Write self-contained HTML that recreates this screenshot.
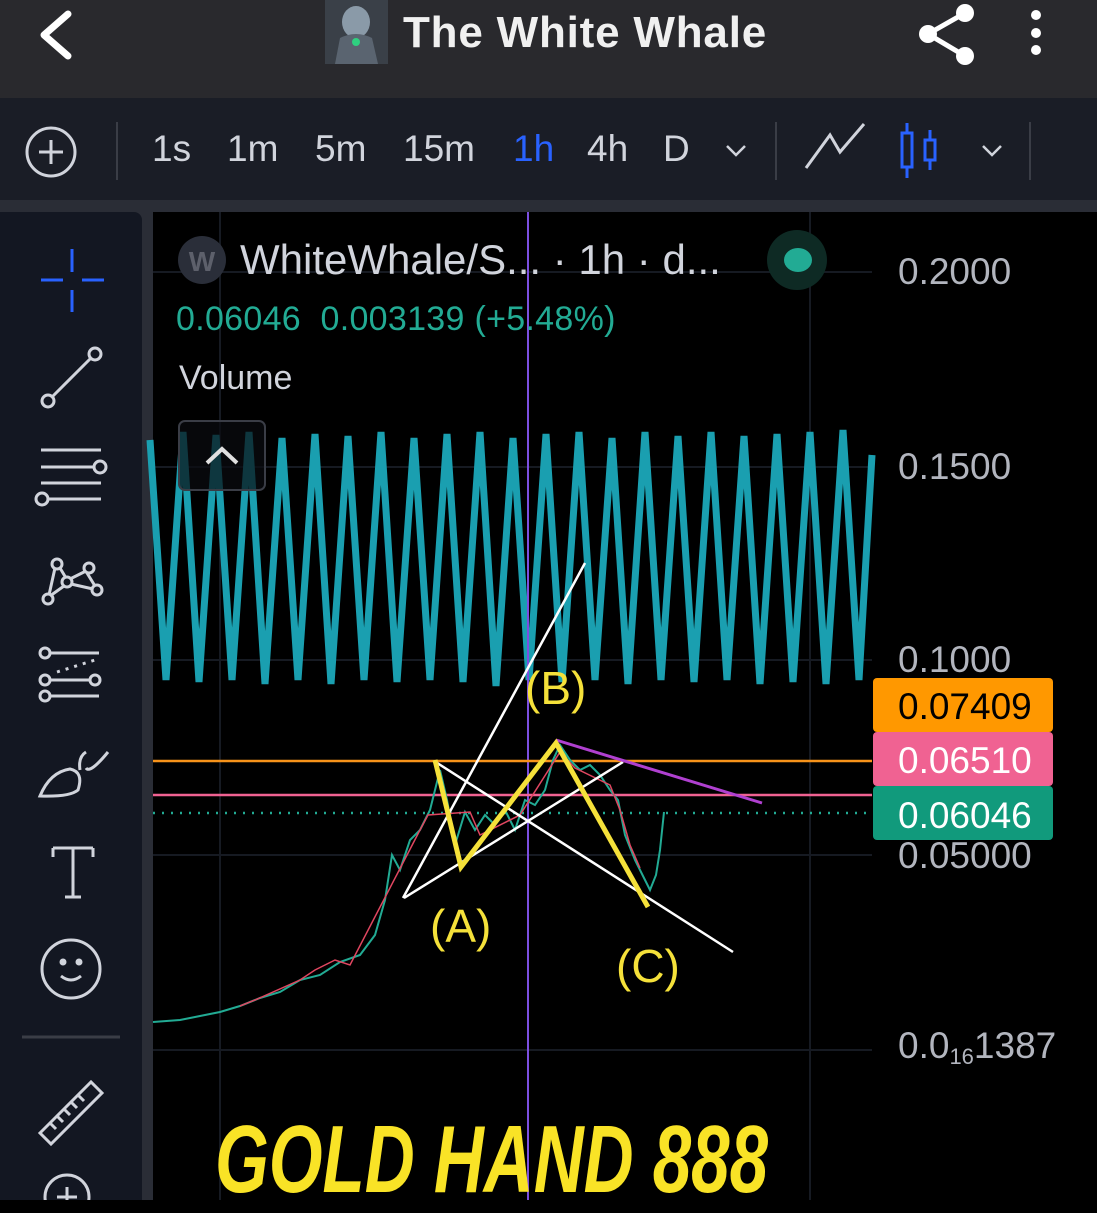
<!DOCTYPE html>
<html><head><meta charset="utf-8"><style>
body{margin:0;width:1097px;height:1200px;overflow:hidden;background:#000;font-family:"Liberation Sans",sans-serif;position:relative}
.a{position:absolute}
</style></head><body>
<div class="a" style="left:0;top:0;width:1097px;height:98px;background:#29292d"></div>
<div class="a" style="left:0;top:98px;width:1097px;height:102px;background:#1a1d26"></div>
<div class="a" style="left:0;top:200px;width:1097px;height:12px;background:#2a2d36"></div>
<div class="a" style="left:0;top:212px;width:153px;height:988px;background:#2a2d36"></div>
<div class="a" style="left:0;top:212px;width:142px;height:988px;background:#131722;border-top-right-radius:8px"></div>
<div class="a" style="left:153px;top:212px;width:944px;height:988px;background:#000;border-top-left-radius:8px"></div>

<!-- header -->
<svg class="a" style="left:0;top:0" width="1097" height="200">
<path d="M68 14 L44 35 L68 56" stroke="#fff" stroke-width="7" fill="none" stroke-linecap="round" stroke-linejoin="round"/>
<rect x="325" y="0" width="63" height="64" fill="#3a4048"/>
<ellipse cx="356" cy="22" rx="14" ry="16" fill="#8a9aa8"/>
<path d="M335 64 L340 38 Q356 30 372 38 L378 64Z" fill="#5a6470"/>
<circle cx="356" cy="42" r="4" fill="#2fd080"/>
<circle cx="965" cy="13" r="9" fill="#fff"/><circle cx="928" cy="34" r="9" fill="#fff"/><circle cx="965" cy="56" r="9" fill="#fff"/>
<path d="M965 13 L928 34 L965 56" stroke="#fff" stroke-width="5" fill="none"/>
<circle cx="1036" cy="15" r="5" fill="#fff"/><circle cx="1036" cy="33" r="5" fill="#fff"/><circle cx="1036" cy="50" r="5" fill="#fff"/>
<circle cx="51" cy="152" r="24" stroke="#d1d4dc" stroke-width="3" fill="none"/>
<path d="M51 140 V164 M39 152 H63" stroke="#d1d4dc" stroke-width="3"/>
<path d="M117 122 V180 M776 122 V180 M1030 122 V180" stroke="#3a3d46" stroke-width="2"/>
<path d="M727 146 L736 155 L745 146 M983 146 L992 155 L1001 146" stroke="#d1d4dc" stroke-width="2.5" fill="none"/>
<path d="M806 168 L830 135 L840 152 L864 124" stroke="#d1d4dc" stroke-width="3" fill="none"/>
<path d="M907 123 V178 M930 130 V170" stroke="#2962ff" stroke-width="3"/>
<rect x="902" y="133" width="10" height="34" stroke="#2962ff" stroke-width="3" fill="#1a1d26"/>
<rect x="925" y="140" width="10" height="20" stroke="#2962ff" stroke-width="3" fill="#1a1d26"/>
</svg>
<div class="a" style="left:403px;top:8px;font-size:44px;font-weight:bold;color:#f0f0f0;letter-spacing:0.8px">The White Whale</div>
<div class="a" style="top:128px;font-size:37px;color:#d1d4dc;left:0;width:760px;height:50px">
<span class="a" style="left:152px">1s</span><span class="a" style="left:227px">1m</span><span class="a" style="left:315px">5m</span><span class="a" style="left:403px">15m</span><span class="a" style="left:513px;color:#2962ff">1h</span><span class="a" style="left:587px">4h</span><span class="a" style="left:663px">D</span></div>

<!-- left tools -->
<svg class="a" style="left:0;top:212px" width="142" height="988">
<g stroke="#2962ff" stroke-width="3"><path d="M72 37 V60 M72 78 V100 M41 68 H63 M82 68 H104"/></g>
<g stroke="#d1d4dc" stroke-width="3" fill="none">
<circle cx="48" cy="189" r="6"/><circle cx="95" cy="142" r="6"/><path d="M52 185 L91 146"/>
<path d="M41 238 H101 M41 255 H93 M41 271 H101 M48 287 H101"/><circle cx="100" cy="255" r="6"/><circle cx="42" cy="287" r="6"/>
<circle cx="57" cy="352" r="5"/><circle cx="89" cy="356" r="5"/><circle cx="67" cy="370" r="5"/><circle cx="48" cy="387" r="5"/><circle cx="97" cy="378" r="5"/>
<path d="M55 356 L49 383 M60 356 L66 366 M71 372 L93 377 M87 361 L95 374 M64 374 L50 384 M70 367 L86 359"/>
<circle cx="45" cy="441" r="5"/><path d="M50 441 H99"/><circle cx="45" cy="468" r="5"/><circle cx="95" cy="468" r="5"/><path d="M50 468 H90"/><circle cx="45" cy="484" r="5"/><path d="M50 484 H99"/>
<path d="M57 460 L95 448" stroke-dasharray="3 6"/>
<path d="M40 584 Q50 560 70 557 Q84 560 78 578 Q70 585 40 584Z M80 558 Q78 545 86 540 M86 556 Q90 562 108 540"/>
<path d="M53 636 H93 M53 636 V645 M93 636 V645 M73 636 V685 M65 685 H81"/>
<circle cx="71" cy="757" r="29"/><circle cx="63" cy="750" r="2" fill="#d1d4dc"/><circle cx="79" cy="750" r="2" fill="#d1d4dc"/><path d="M61 764 Q71 772 81 764"/>
<path d="M40 921 L91 870 L102 881 L51 932Z M50 911 L56 917 M57 904 L63 910 M64 897 L70 903 M71 890 L77 896 M78 883 L84 889"/>
<circle cx="67" cy="985" r="22"/><path d="M67 975 V995 M57 985 H77"/>
</g>
<path d="M22 825 H120" stroke="#3a3d46" stroke-width="3"/>
</svg>

<!-- chart -->
<svg class="a" style="left:0;top:0" width="1097" height="1200">
<g stroke="#161a22" stroke-width="2"><path d="M153 272 H872 M153 467 H872 M153 660 H872 M153 855 H872 M153 1050 H872 M810 212 V1200 M220 212 V1200"/></g>
<polyline fill="none" stroke="#1a9fb0" stroke-width="7" stroke-linejoin="miter" points="150,440 166,680 183,432 199,682 216,435 232,680 249,432 265,684 282,438 298,680 315,434 331,684 348,436 364,680 381,432 397,682 414,438 430,680 447,434 463,682 480,432 496,686 513,438 529,680 546,434 562,682 579,432 595,680 612,438 628,684 645,432 661,680 678,436 694,682 711,432 727,680 744,436 760,684 777,434 793,682 810,432 826,684 843,430 859,680 872,455"/>
<rect x="179" y="421" width="86" height="69" rx="6" fill="rgba(10,12,16,0.7)" stroke="#3a3d46" stroke-width="2"/>
<path d="M207 463 L222 449 L237 463" stroke="#e0e0e0" stroke-width="4" fill="none"/>
<path d="M528 212 V1200" stroke="#7b4fe0" stroke-width="2"/>
<path d="M153 761 H872" stroke="#f7931a" stroke-width="2.5"/>
<path d="M153 795 H872" stroke="#f06292" stroke-width="2.5"/>
<path d="M153 813 H872" stroke="#22ab94" stroke-width="2.5" stroke-dasharray="2 7"/>
<polyline fill="none" stroke="#22ab94" stroke-width="2" points="153,1022 180,1020 200,1016 220,1012 240,1006 260,998 280,992 300,980 320,975 340,962 360,955 375,935 385,900 392,855 400,870 410,840 420,830 430,810 440,770 447,800 455,845 465,812 475,830 485,815 495,825 505,810 515,830 525,800 535,805 545,790 553,760 560,745 570,760 580,770 590,765 600,775 610,790 618,800 625,835 635,860 645,880 650,890 656,875 660,850 664,812"/>
<polyline fill="none" stroke="#e04660" stroke-width="1.5" points="240,1006 255,1000 300,980 315,970 335,960 350,965 420,830 428,815 470,812 480,835 520,815 560,752 575,768 610,785 620,810 630,845 640,868"/>
<g stroke="#fff" stroke-width="2.5"><path d="M403 898 L585 563 M404 898 L623 762 M434 761 L733 952"/></g>
<path d="M556 740 L762 803" stroke="#b040d0" stroke-width="3"/>
<polyline fill="none" stroke="#f5e13a" stroke-width="5" points="435,760 461,867 556,743 648,907"/>
<g fill="#f5e13a" font-size="46" font-family="Liberation Sans"><text x="430" y="942">(A)</text><text x="525" y="704">(B)</text><text x="616" y="982">(C)</text></g>
<circle cx="202" cy="260" r="24" fill="#2a2e39"/><text x="202" y="271" fill="#5d606b" font-size="28" font-weight="bold" text-anchor="middle">W</text>
<circle cx="797" cy="260" r="30" fill="#0e2a24"/><ellipse cx="798" cy="260" rx="14" ry="12" fill="#22ab94"/>
<g fill="#b2b5be" font-size="37"><text x="898" y="284">0.2000</text><text x="898" y="479">0.1500</text><text x="898" y="672">0.1000</text><text x="898" y="868">0.05000</text><text x="898" y="1058">0.0<tspan font-size="22" dy="6">16</tspan><tspan dy="-6">1387</tspan></text></g>
<rect x="873" y="678" width="180" height="54" rx="4" fill="#ff9800"/>
<rect x="873" y="732" width="180" height="54" rx="4" fill="#f06292"/>
<rect x="873" y="786" width="180" height="54" rx="4" fill="#119a7c"/>
<g font-size="37"><text x="898" y="719" fill="#000">0.07409</text><text x="898" y="773" fill="#fff">0.06510</text><text x="898" y="828" fill="#fff">0.06046</text></g>
</svg>
<div class="a" style="left:240px;top:236px;font-size:42px;color:#d1d4dc">WhiteWhale/S... · 1h · d...</div>
<div class="a" style="left:176px;top:300px;font-size:34px;color:#22ab94;letter-spacing:0.3px">0.06046&nbsp; 0.003139 (+5.48%)</div>
<div class="a" style="left:179px;top:359px;font-size:34px;color:#d1d4dc">Volume</div>
<div class="a" style="left:215px;top:1112px;font-size:96px;font-weight:bold;font-style:italic;color:#f9e326;transform:scaleX(0.72);transform-origin:left top;white-space:nowrap;line-height:1">GOLD HAND 888</div>
</body></html>
